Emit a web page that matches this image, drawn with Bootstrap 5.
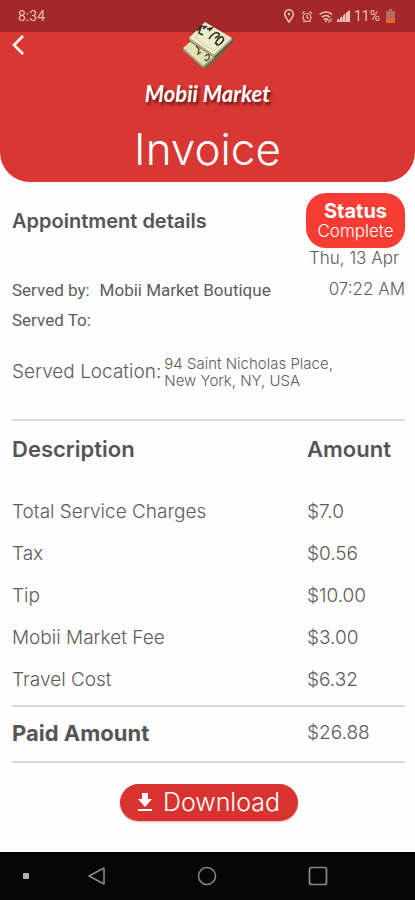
<!DOCTYPE html>
<html lang="en">
<head>
<meta charset="utf-8">
<meta name="viewport" content="width=device-width, initial-scale=1">
<title>Invoice - Mobii Market</title>
<link href="https://cdn.jsdelivr.net/npm/bootstrap@5.3.0/dist/css/bootstrap.min.css" rel="stylesheet">
<style>
  body { font-family: Inter, "Open Sans", sans-serif; font-weight: 300; font-size: 19px; line-height: 24px; color: #5c5c5c; background: #fefefe; }
  .app-header { background: #d93734; border-radius: 0 0 30px 30px; }
  .status-strip { background: #a42829; height: 32px; padding: 0 20px 0 18px; font: 400 14px/32px Roboto, sans-serif; color: #e9bfb9; }
  .status-icons { gap: 6px; }
  .header-main { padding: 0 12px 7px; }
  .back-btn { top: 10px; left: 5px; width: 26px; height: 26px; line-height: 0; }
  .brand { margin-top: -10px; }
  .brand-name { font: italic 700 22px/26px Lato, sans-serif; color: #fff; text-shadow: 2px 3px 3px #6b1715; margin-top: 12px; }
  .page-title { font-size: 44px; line-height: 52px; font-weight: 300; margin-top: 16px; }
  .content { padding: 11px 10px 30px 12px; }
  .section-title { font-size: 20px; font-weight: 600; color: #555; }
  .state-pill { background: #f63c33; border-radius: 20px; width: 99px; height: 55px; line-height: 20px; color: #fff; font-size: 17px; padding-top: 8px; }
  .state-pill strong { font-size: 20px; font-weight: 700; }
  .visit-date { font-size: 17px; line-height: 20px; padding-right: 6px; }
  .served { font: 400 17px/30px Roboto, sans-serif; margin-top: 7px; }
  .served-by { gap: 10px; }
  .visit-time { font-family: Inter, sans-serif; font-weight: 300; line-height: 28px; }
  .place { margin-top: 20px; gap: 3px; }
  .place address { font-size: 15px; line-height: 17px; }
  .charges { margin-top: 30px; border-collapse: separate; border-spacing: 0; border-top: 2px solid #d9d9d9; }
  .charges th, .charges td { padding: 9px 0; text-align: left; font-weight: 300; vertical-align: top; }
  .charges thead th { padding: 16px 0 30px; font-size: 22px; font-weight: 600; color: #555; }
  .charges .amount { width: 98px; }
  .charges tbody tr:last-child > * { padding-bottom: 13px; }
  .charges tfoot > tr > * { border-top: 2px solid #d9d9d9; border-bottom: 2px solid #d9d9d9; padding: 14px 0 16px; }
  .charges tfoot th { font-size: 22px; font-weight: 700; color: #555; }
  .download-btn { margin-top: 21px; width: 178px; height: 37px; background: #d93330; color: #fff; font-size: 25px; font-weight: 300; gap: 10px; box-shadow: 0 1px 2px #d9333066; }
  .download-btn:hover { background: #b92927; color: #fff; }
  .system-nav { background: #060606; height: 48px; grid-template-columns: 52fr 90fr 130fr 92fr 51fr; }
  .system-nav button { height: 48px; line-height: 0; }
</style>
</head>
<body>
<div class="d-flex flex-column min-vh-100">
  <header class="app-header text-center text-white">
    <div class="status-strip d-flex justify-content-between">
      <span>8:34</span>
      <div class="status-icons d-flex align-items-center">
        <svg width="12" height="14" viewBox="0 0 12 14" fill="none" stroke="currentColor" stroke-width="1.5" aria-hidden="true"><path d="M6 13C4 10 1.7 7.7 1.7 5a4.3 4.3 0 0 1 8.6 0C10.300 7.700 8 10 6 13z"/><circle cx="6" cy="5" r="1.200" fill="currentColor" stroke="none"/></svg>
        <svg width="12" height="13" viewBox="0 0 12 13" fill="none" stroke="currentColor" stroke-width="1.200" aria-hidden="true"><circle cx="6" cy="7.500" r="4"/><path d="M6 5v3h2M1 3.500 3.500 1.500M11 3.500 8.500 1.500M3.500 11 2.500 12M8.500 11l1 1"/></svg>
        <div class="d-flex align-items-center gap-1">
          <svg width="14" height="13" viewBox="0 0 14 13" fill="none" stroke="currentColor" stroke-width="1.700" aria-hidden="true"><path d="M.8 4.500a9 9 0 0 1 12.400 0M3 7.200a6 6 0 0 1 8 0M5 9.700a3 3 0 0 1 4 0"/><path d="M7 12.500 5.500 10.500h3z" fill="currentColor" stroke="none"/><path d="M12 8v4M10 9v4" stroke-width="1"/></svg>
          <svg width="13" height="12" viewBox="0 0 13 12" fill="currentColor" aria-hidden="true"><path d="M0 12 13 0v12z" opacity=".6"/><path d="M0 12v-2l2-1.500V12zM3 12V8l2-1.700V12zM6 12V5.500l2-1.700V12zM9 12V3l4-3v12z"/></svg>
          <span>11%</span>
        </div>
        <svg width="9" height="14" viewBox="0 0 9 14" aria-hidden="true"><path d="M3 0h3v2h2a1 1 0 0 1 1 1v7H0V3a1 1 0 0 1 1-1h2z" fill="#b76a60"/><path d="M0 10h9v3a1 1 0 0 1-1 1H1a1 1 0 0 1-1-1z" fill="#e8662a"/></svg>
      </div>
    </div>
    <div class="header-main position-relative">
      <button type="button" class="back-btn btn p-0 border-0 text-white position-absolute" aria-label="Back">
        <svg width="14" height="22" viewBox="0 0 14 22" fill="none" stroke="currentColor" stroke-width="2.600"><path d="M12 2 3 11l9 9"/></svg>
      </button>
      <div class="brand d-flex flex-column align-items-center">
        <svg width="52" height="47" viewBox="0 0 52 47" aria-hidden="true">
          <path d="M10 20 0 27l20 19 4 1 21-19-21-9z" fill="#6e6746"/>
          <path d="M9 19 1 26l20 18 22-19-20-10z" fill="#e3dfb7"/>
          <path d="m1 26 20 18 22-19v2L21 46 1 28z" fill="#aaa37a"/>
          <path d="M22 1 51 17v3L33 36 7 19v-3z" fill="#59583f"/>
          <path d="m23 0 27 16-18 17L7 16z" fill="#efeccd"/>
          <path d="m7 16 25 17 18-17v2L32 35 7 18z" fill="#b4ad86"/>
          <path d="m22 3 23 13-13 13-19-13z" fill="none" stroke="#d2cda6"/>
          <path d="M15 9l4-5 5 1-3 2M19 5l-2 6 4 2M25 7l5-1-3 3M27 17c3-5 6-7 9-6s0 4-3 5M33 22c2-4 4-8 7-7s1 5-2 7-4 1-3-1" fill="none" stroke="#292a21" stroke-width="1.500"/>
          <path d="m14 24 3 3-1 5 3-2M23 34c4-3 5-1 4 2s-4 4-4 1" fill="none" stroke="#4b4937" stroke-width="1.300"/>
        </svg>
        <div class="brand-name">Mobii Market</div>
      </div>
      <h1 class="page-title mb-0">Invoice</h1>
    </div>
  </header>

  <main class="content">
    <section aria-label="Appointment details">
      <div class="d-flex justify-content-between align-items-center">
        <h2 class="section-title mb-0">Appointment details</h2>
        <div class="state-pill d-flex flex-column text-center"><strong>Status</strong><span>Complete</span></div>
      </div>
      <div class="visit-date text-end">Thu, 13 Apr</div>
      <div class="served">
        <div class="d-flex justify-content-between">
          <div class="served-by d-flex"><span>Served by:</span><span>Mobii Market Boutique</span></div>
          <span class="visit-time">07:22 AM</span>
        </div>
        <div>Served To:</div>
      </div>
      <div class="place d-flex align-items-center">
        <span>Served Location:</span>
        <address class="mb-0">94 Saint Nicholas Place,<br>New York, NY, USA</address>
      </div>
    </section>
    <table class="charges w-100">
      <thead><tr><th scope="col">Description</th><th scope="col" class="amount">Amount</th></tr></thead>
      <tbody>
        <tr><th scope="row">Total Service Charges</th><td>$7.0</td></tr>
        <tr><th scope="row">Tax</th><td>$0.56</td></tr>
        <tr><th scope="row">Tip</th><td>$10.00</td></tr>
        <tr><th scope="row">Mobii Market Fee</th><td>$3.00</td></tr>
        <tr><th scope="row">Travel Cost</th><td>$6.32</td></tr>
      </tbody>
      <tfoot><tr><th scope="row">Paid Amount</th><td>$26.88</td></tr></tfoot>
    </table>
    <button type="button" class="download-btn btn rounded-pill border-0 p-0 d-flex align-items-center justify-content-center mx-auto">
      <svg width="16" height="19" viewBox="0 0 16 19" fill="currentColor" aria-hidden="true"><path d="M5 0h6v6h4l-7 8-7-8h4zM1 16h14v2H1z"/></svg>
      <span>Download</span>
    </button>
  </main>

  <nav class="system-nav mt-auto d-grid align-items-center" aria-label="System">
    <button type="button" class="btn p-0 border-0" aria-label="Keep bar visible"><svg width="8" height="8" viewBox="0 0 8 8"><rect x="1" y="1" width="6" height="6" rx="1" fill="#b5b5b5"/></svg></button>
    <button type="button" class="btn p-0 border-0" aria-label="Back"><svg width="20" height="20" viewBox="0 0 20 20" fill="none" stroke="#8b8b8b" stroke-width="1.500"><path d="M17 2v16L2 10z" stroke-linejoin="round"/></svg></button>
    <button type="button" class="btn p-0 border-0" aria-label="Home"><svg width="20" height="20" viewBox="0 0 20 20" fill="none" stroke="#8b8b8b" stroke-width="1.500"><circle cx="10" cy="10" r="8.500"/></svg></button>
    <button type="button" class="btn p-0 border-0" aria-label="Recent apps"><svg width="20" height="20" viewBox="0 0 20 20" fill="none" stroke="#8b8b8b" stroke-width="1.700"><rect x="1.500" y="1.500" width="17" height="17" rx="2"/></svg></button>
  </nav>
</div>
<script src="https://cdn.jsdelivr.net/npm/bootstrap@5.3.0/dist/js/bootstrap.bundle.min.js"></script>
</body>
</html>
